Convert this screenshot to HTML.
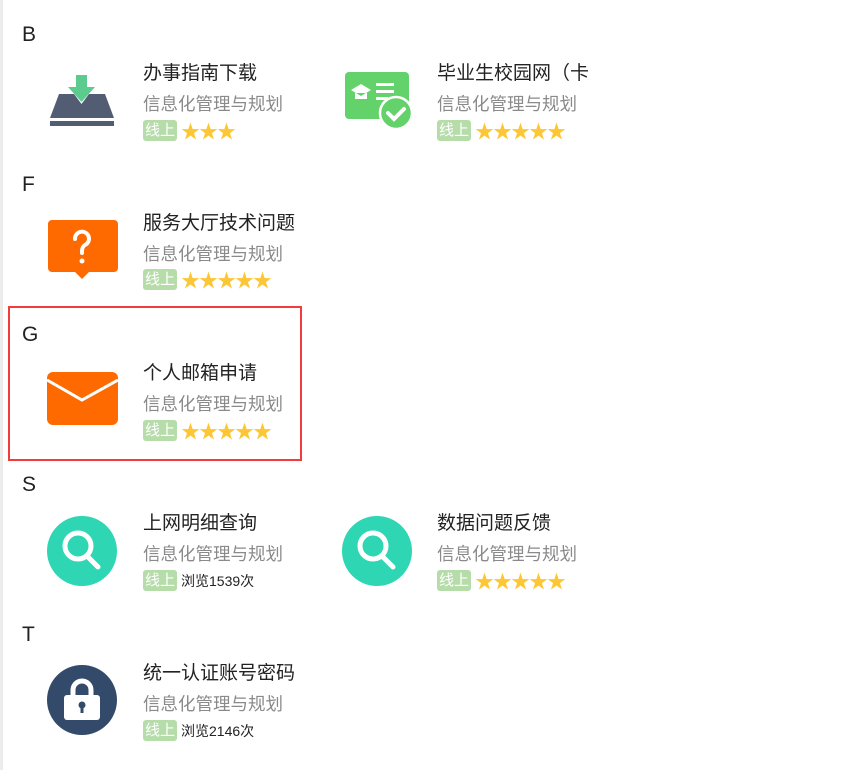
<!DOCTYPE html>
<html><head><meta charset="utf-8"><style>
*{margin:0;padding:0;box-sizing:border-box}
body{width:847px;height:770px;background:#fff;position:relative;overflow:hidden;font-family:"Liberation Sans","Noto Sans CJK SC",sans-serif}
.lb{position:absolute;left:0;top:0;width:3px;height:770px;background:#ececec}
.L{position:absolute;left:22px;font-size:21px;color:#222;line-height:24px}
.t{position:absolute;font-size:19px;color:#222;line-height:22px;white-space:nowrap}
.s{position:absolute;font-size:17.5px;color:#8a8a8a;line-height:22px;white-space:nowrap}
.b{position:absolute;height:21px;display:flex;align-items:center;white-space:nowrap}
.b i{font-style:normal;background:#b6dcaa;color:#fff;font-size:15px;border-radius:3px;padding:0 2px;height:21px;line-height:21px;margin-right:4px}
.b .st{color:#fcc634;font-size:19px;letter-spacing:-1px}
.b .v{font-size:14px;color:#222}
.ic{position:absolute}
.red{position:absolute;left:8px;top:306px;width:294px;height:155px;border:2px solid #f23c3c}
</style></head><body>
<div class="lb"></div>
<div class="red"></div>

<div class="L" style="top:23px">B</div>
<svg class="ic" style="left:46px;top:70px" width="72" height="60" viewBox="0 0 72 60">
<rect x="30" y="5" width="11" height="13" fill="#5ccb8e"/><polygon points="22,17 49,17 35.5,32" fill="#5ccb8e"/>
<polygon points="13,24 28,24 35.5,34 43,24 59,24 68,48 4,48" fill="#525c73"/>
<rect x="4" y="51" width="64" height="5" fill="#525c73"/></svg>
<div class="t" style="left:143px;top:63px">办事指南下载</div>
<div class="s" style="left:143px;top:93px">信息化管理与规划</div>
<div class="b" style="left:143px;top:120px"><i>线上</i><span class="st">★★★</span></div>

<svg class="ic" style="left:342px;top:68px" width="72" height="64" viewBox="0 0 72 64">
<rect x="3" y="4" width="64" height="47" rx="4" fill="#63d26a"/>
<path d="M9 22 L19 16 L29 22 L19 28Z M13 25 v6 h12 v-6" fill="#fff"/>
<rect x="34" y="15" width="18" height="3" fill="#fff"/><rect x="34" y="22" width="18" height="3" fill="#fff"/><rect x="34" y="29" width="12" height="3" fill="#fff"/>
<circle cx="54" cy="45" r="16" fill="#63d26a" stroke="#fff" stroke-width="2.5"/>
<path d="M46 45 l6 6 l10 -10" stroke="#fff" stroke-width="4" fill="none" stroke-linecap="round"/></svg>
<div class="t" style="left:437px;top:63px">毕业生校园网（卡</div>
<div class="s" style="left:437px;top:93px">信息化管理与规划</div>
<div class="b" style="left:437px;top:120px"><i>线上</i><span class="st">★★★★★</span></div>

<div class="L" style="top:173px">F</div>
<svg class="ic" style="left:46px;top:218px" width="72" height="62" viewBox="0 0 72 62">
<rect x="2" y="2" width="70" height="52" rx="4" fill="#ff6a00"/><polygon points="28,53 44,53 36,61" fill="#ff6a00"/>
<path d="M29 21 a7 7 0 1 1 10 6 q-3 2 -3 6 v2" stroke="#fff" stroke-width="4" fill="none" stroke-linecap="round"/>
<circle cx="36" cy="43" r="2.5" fill="#fff"/></svg>
<div class="t" style="left:143px;top:213px">服务大厅技术问题</div>
<div class="s" style="left:143px;top:243px">信息化管理与规划</div>
<div class="b" style="left:143px;top:269px"><i>线上</i><span class="st">★★★★★</span></div>

<div class="L" style="top:323px">G</div>
<svg class="ic" style="left:46px;top:370px" width="72" height="56" viewBox="0 0 72 56">
<rect x="1" y="2" width="71" height="53" rx="6" fill="#ff6a00"/>
<path d="M1 10 L36 30 L72 10" stroke="#fff" stroke-width="3" fill="none"/></svg>
<div class="t" style="left:143px;top:363px">个人邮箱申请</div>
<div class="s" style="left:143px;top:393px">信息化管理与规划</div>
<div class="b" style="left:143px;top:420px"><i>线上</i><span class="st">★★★★★</span></div>

<div class="L" style="top:473px">S</div>
<svg class="ic" style="left:46px;top:515px" width="72" height="72" viewBox="0 0 72 72">
<circle cx="36" cy="36" r="35" fill="#2ed6b4"/><circle cx="32" cy="31" r="13" stroke="#fff" stroke-width="5" fill="none"/>
<path d="M41 41 L52 52" stroke="#fff" stroke-width="5" stroke-linecap="round"/></svg>
<div class="t" style="left:143px;top:513px">上网明细查询</div>
<div class="s" style="left:143px;top:543px">信息化管理与规划</div>
<div class="b" style="left:143px;top:570px"><i>线上</i><span class="v">浏览1539次</span></div>

<svg class="ic" style="left:341px;top:515px" width="72" height="72" viewBox="0 0 72 72">
<circle cx="36" cy="36" r="35" fill="#2ed6b4"/><circle cx="32" cy="31" r="13" stroke="#fff" stroke-width="5" fill="none"/>
<path d="M41 41 L52 52" stroke="#fff" stroke-width="5" stroke-linecap="round"/></svg>
<div class="t" style="left:437px;top:513px">数据问题反馈</div>
<div class="s" style="left:437px;top:543px">信息化管理与规划</div>
<div class="b" style="left:437px;top:570px"><i>线上</i><span class="st">★★★★★</span></div>

<div class="L" style="top:623px">T</div>
<svg class="ic" style="left:46px;top:664px" width="72" height="72" viewBox="0 0 72 72">
<circle cx="36" cy="36" r="35" fill="#344a6a"/>
<path d="M27 32 v-6 a9 9 0 0 1 18 0 v6" stroke="#fff" stroke-width="5" fill="none"/>
<rect x="18" y="31" width="36" height="25" rx="3" fill="#fff"/>
<circle cx="36" cy="41" r="3.5" fill="#344a6a"/><rect x="34.5" y="41" width="3" height="8" fill="#344a6a"/></svg>
<div class="t" style="left:143px;top:663px">统一认证账号密码</div>
<div class="s" style="left:143px;top:693px">信息化管理与规划</div>
<div class="b" style="left:143px;top:720px"><i>线上</i><span class="v">浏览2146次</span></div>
</body></html>
